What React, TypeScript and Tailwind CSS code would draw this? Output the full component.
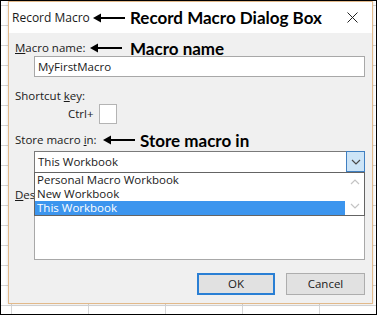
import React from "react";

const Arrow = ({ w = 32 }: { w?: number }) => (
  <svg width={w} height="10" viewBox={`0 0 ${w} 10`} className="block shrink-0">
    <line x1="6" y1="5" x2={w} y2="5" stroke="#000" strokeWidth="2" />
    <polygon points="0,5 8,0.5 8,9.5" fill="#000" />
  </svg>
);

const Chevron = ({ up = false, color = "#555" }: { up?: boolean; color?: string }) => (
  <svg width="10" height="6" viewBox="0 0 10 6" className="block">
    <polyline
      points={up ? "1,5 5,1 9,5" : "1,1 5,5 9,1"}
      fill="none"
      stroke={color}
      strokeWidth="1.2"
    />
  </svg>
);

export default function App() {
  const ui = "font-['Open_Sans',sans-serif] text-[11.5px] text-[#1a1a1a] leading-none";
  const ann = "font-['Lato',sans-serif] font-bold text-[17px] text-black leading-none whitespace-nowrap";
  return (
    <div className="w-[377px] h-[315px] border border-black bg-white bg-[linear-gradient(to_right,#d6d6d6_1px,transparent_1px),linear-gradient(to_bottom,#d6d6d6_1px,transparent_1px)] bg-[size:77px_20px] bg-[position:10px_4px] pl-[7px] pr-[4px] overflow-hidden">
      <div className={`w-[365px] h-[303px] border border-[#e2b98a] bg-[#f0f0f0] flex flex-col shadow-[0_0_3px_rgba(0,0,0,0.15)] ${ui}`}>
        {/* title bar */}
        <div className="h-[31px] bg-white flex items-center pl-[3px] pr-[14px] shrink-0">
          <span className="w-[81px] whitespace-nowrap text-[12px]">Record Macro</span>
          <Arrow w={32} />
          <span className={`${ann} ml-[5px]`}>Record Macro Dialog Box</span>
          <span className="ml-auto">
            <svg width="11" height="11" viewBox="0 0 11 11" className="block">
              <path d="M0.5 0.5 L10.5 10.5 M10.5 0.5 L0.5 10.5" stroke="#222" strokeWidth="1" />
            </svg>
          </span>
        </div>
        {/* body */}
        <div className="flex flex-col pl-[6px] pr-[7px] pt-[7px] pb-[8px]">
          <div className="h-[16px] flex items-center">
            <span className="w-[75px] whitespace-nowrap"><span className="underline">M</span>acro name:</span>
            <Arrow w={32} />
            <span className={`${ann} ml-[8px]`}>Macro name</span>
          </div>
          <div className="ml-[19px] h-[21px] bg-white border border-[#a8a8a8] flex items-center pl-[3px]">
            MyFirstMacro
          </div>
          <div className="mt-[11px] h-[16px] flex items-center">
            <span>Shortcut <span className="underline">k</span>ey:</span>
          </div>
          <div className="h-[20px] flex items-center ml-[53px]">
            <span>Ctrl+</span>
            <div className="ml-[5px] w-[18px] h-[20px] bg-white border border-[#b4b4b4]" />
          </div>
          <div className="mt-[8px] h-[16px] flex items-center">
            <span className="w-[88px] whitespace-nowrap">Store macro <span className="underline">i</span>n:</span>
            <Arrow w={32} />
            <span className={`${ann} ml-[5px]`}>Store macro in</span>
          </div>
          <div className="relative mt-[3px] ml-[19px] z-10">
            <div className="h-[22px] bg-white border border-[#7a7a7a] flex items-center pl-[3px]">
              <span>This Workbook</span>
              <div className="ml-auto w-[19px] h-[21px] -mr-[1px] -mt-[1px] self-start bg-[#cce4f7] border border-[#3f7fc1] flex items-center justify-center">
                <Chevron color="#4a4a4a" />
              </div>
            </div>
            {/* dropdown list overlay */}
            <div className="absolute left-0 right-0 top-[21px] h-[44px] bg-white border border-[#646464] flex">
              <div className="flex-1 flex flex-col">
                <div className="h-[14px] flex items-center pl-[2px]">Personal Macro Workbook</div>
                <div className="h-[14px] flex items-center pl-[2px]">New Workbook</div>
                <div className="h-[14px] flex items-center pl-[2px] bg-[#3c95ee] text-white">This Workbook</div>
              </div>
              <div className="w-[19px] flex flex-col items-center justify-between py-[6px]">
                <Chevron up color="#c4c4c4" />
                <Chevron color="#c4c4c4" />
              </div>
            </div>
          </div>
          <div className="mt-[14px] h-[16px] flex items-center">
            <span className="w-[19px] overflow-hidden whitespace-nowrap"><span className="underline">D</span>escription:</span>
          </div>
          <div className="mt-[2px] ml-[19px] h-[55px] bg-white border border-[#a8a8a8]" />
          <div className="mt-[13px] flex justify-end gap-[11px]">
            <button className="w-[78px] h-[22px] bg-[#e1e1e1] border-2 border-[#2a7fd4] flex items-center justify-center">
              OK
            </button>
            <button className="w-[79px] h-[22px] bg-[#e1e1e1] border border-[#adadad] flex items-center justify-center">
              Cancel
            </button>
          </div>
        </div>
      </div>
    </div>
  );
}
